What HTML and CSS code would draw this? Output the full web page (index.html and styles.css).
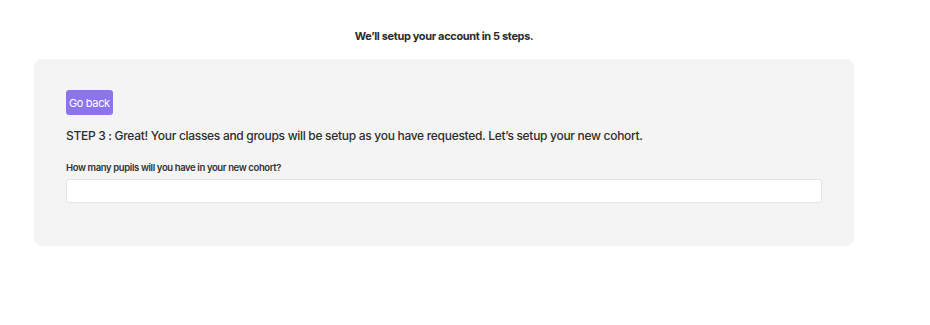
FILE: index.html
```html
<!DOCTYPE html>
<html lang="en">
<head>
<meta charset="UTF-8" />
<meta name="viewport" content="width=device-width, initial-scale=1" />
<title>Account setup</title>
<link rel="stylesheet" href="styles.css">
</head>
<body>
  <div class="setup">
    <h1 class="intro">We’ll setup your account in 5 steps.</h1>

    <div class="panel">
      <button class="back" type="button">Go back</button>
      <h2 class="step">STEP 3 : Great! Your classes and groups will be setup as you have requested. Let’s setup your new cohort.</h2>
      <label class="field-label" for="pupils">How many pupils will you have in your new cohort?</label>
      <input class="field" id="pupils" type="text" />
    </div>
  </div>
</body>
</html>
```

FILE: styles.css
```css
body {
  margin: 0;
  background: #fff;
  font-family: Inter, "Noto Sans", sans-serif;
  color: #333;
}

.setup {
  width: 820px;
  margin-left: 34px;
  padding-top: 29px;
}

.intro {
  margin: 0 0 16px;
  text-align: center;
  font-size: 11px;
  line-height: 14px;
  font-weight: 700;
  letter-spacing: -0.35px;
  color: #2b2b2b;
}

.panel {
  display: flex;
  flex-direction: column;
  align-items: flex-start;
  background: #f4f4f4;
  border-radius: 8px;
  padding: 31px 32px 43px;
}

.back {
  height: 25px;
  padding: 0 3px;
  border: none;
  border-radius: 3px;
  background: #8c74ee;
  color: #fff;
  font-family: inherit;
  font-size: 11px;
  letter-spacing: -0.35px;
  cursor: pointer;
}

.step {
  margin: 12px 0 17px;
  font-size: 12px;
  line-height: 18px;
  font-weight: 500;
  letter-spacing: -0.3px;
  color: #2e2e2e;
}

.field-label {
  font-size: 9.5px;
  line-height: 12px;
  font-weight: 600;
  letter-spacing: -0.38px;
  color: #333;
  margin-bottom: 5px;
}

.field {
  box-sizing: border-box;
  width: 100%;
  height: 24px;
  border: 1px solid #e2e6ea;
  border-radius: 3px;
  background: #fff;
}
```
